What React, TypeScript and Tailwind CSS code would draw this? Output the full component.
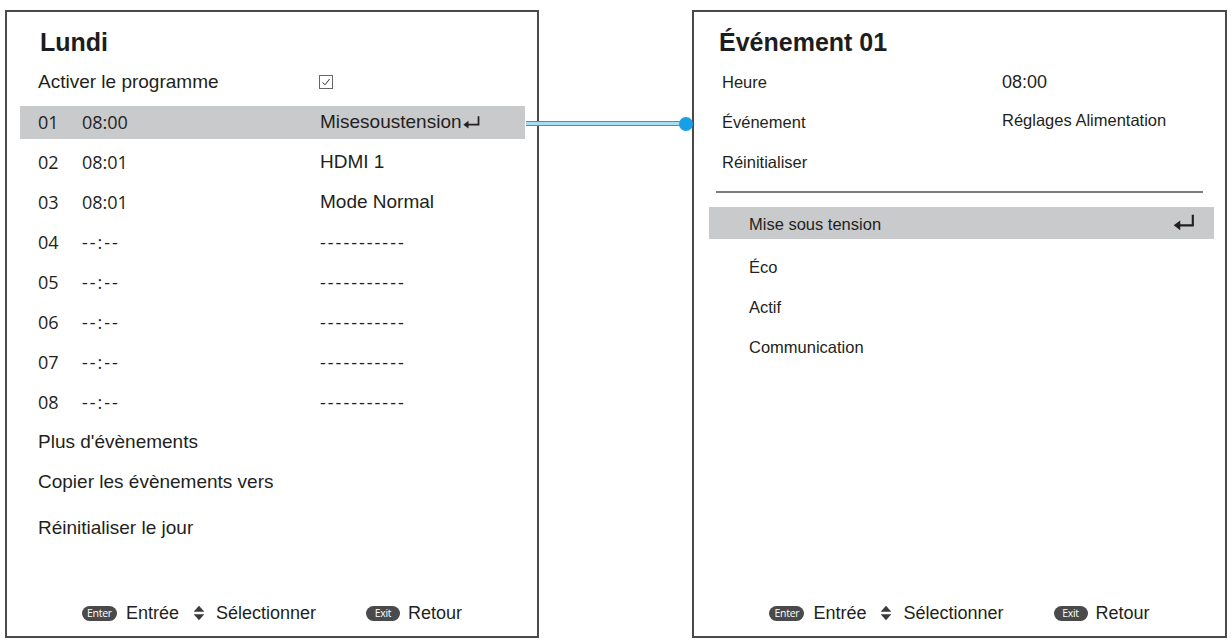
import type { ReactNode } from "react";

const sans = "font-['Liberation_Sans',Arial,sans-serif]";
const digits = "font-['Open_Sans','Noto_Sans',sans-serif]";

type Slot = { no: string; time: string; event: string; active?: boolean };

const slots: Slot[] = [
  { no: "01", time: "08:00", event: "Misesoustension", active: true },
  { no: "02", time: "08:01", event: "HDMI 1" },
  { no: "03", time: "08:01", event: "Mode Normal" },
  { no: "04", time: "--:--", event: "-----------" },
  { no: "05", time: "--:--", event: "-----------" },
  { no: "06", time: "--:--", event: "-----------" },
  { no: "07", time: "--:--", event: "-----------" },
  { no: "08", time: "--:--", event: "-----------" },
];

const powerOptions = ["Éco", "Actif", "Communication"];

function ReturnGlyph({ className }: { className: string }) {
  return (
    <svg viewBox="0 0 16 12" className={className} fill="none">
      <path d="M4 8.5H14.6V0.5" stroke="currentColor" strokeWidth="1.6" />
      <path d="M0.3 8.5L5.2 4.8V12.2Z" fill="currentColor" />
    </svg>
  );
}

function CheckBox() {
  return (
    <svg viewBox="0 0 14 14" className="w-[14px] h-[14px]">
      <rect x="0.5" y="0.5" width="13" height="13" fill="none" stroke="#666" />
      <path d="M3.6 7.3L6 9.8L10.6 4" stroke="#333" strokeWidth="1" fill="none" />
    </svg>
  );
}

function UpDown() {
  return (
    <svg viewBox="0 0 11 15" className="w-[12px] h-[16px] text-[#3a3a3a]">
      <path d="M0.5 6.3L5.5 0.8L10.5 6.3Z" fill="currentColor" />
      <path d="M0.5 8.7L5.5 14.2L10.5 8.7Z" fill="currentColor" />
    </svg>
  );
}

function Key({ label, width }: { label: string; width: string }) {
  return (
    <span
      className={`${width} h-[15px] rounded-full bg-[#4a4a4a] text-white text-[10.5px] leading-none tracking-[-0.3px] flex items-center justify-center ${digits}`}
    >
      {label}
    </span>
  );
}

function HintBar() {
  return (
    <div className={`mt-auto mb-[11px] h-[24px] flex items-center justify-center text-[18px] text-[#231f20] ${sans}`}>
      <Key label="Enter" width="w-[35px]" />
      <span className="ml-[9px]">Entrée</span>
      <span className="ml-[14px] flex">
        <UpDown />
      </span>
      <span className="ml-[11px]">Sélectionner</span>
      <span className="ml-[50px]">
        <Key label="Exit" width="w-[34px]" />
      </span>
      <span className="ml-[8px]">Retour</span>
    </div>
  );
}

function Panel({ children, width }: { children: ReactNode; width: string }) {
  return (
    <section className={`${width} h-[628px] border-2 border-[#4a4a4a] bg-white flex flex-col pt-[15px] text-[#231f20] ${sans}`}>
      {children}
    </section>
  );
}

// Left list rows share the same inset so the highlight lines up with the text columns
function DayRow({ children, active, className = "" }: { children: ReactNode; active?: boolean; className?: string }) {
  return (
    <div className={`ml-[13px] mr-[12px] h-[40px] flex items-center ${className}`}>
      <div className={`w-full h-[33px] flex items-center pl-[18px] ${active ? "bg-[#c9cacc]" : ""}`}>{children}</div>
    </div>
  );
}

function DayPanel() {
  return (
    <Panel width="w-[534px]">
      <h1 className="pl-[33px] h-[30px] leading-[30px] text-[25px] font-bold text-[#1d1d1d]">Lundi</h1>

      <div className="mt-[5px] text-[19px]">
        <DayRow>
          <span className="w-[281px]">Activer le programme</span>
          <CheckBox />
        </DayRow>

        {slots.map((s) => {
          const empty = s.time.startsWith("-");
          return (
            <DayRow key={s.no} active={s.active}>
              <span className={`w-[44px] text-[18px] ${digits}`}>{s.no}</span>
              <span className={`w-[238px] text-[18px] ${digits} ${empty ? "tracking-[2px]" : ""}`}>{s.time}</span>
              <span className={`flex items-center ${empty ? `text-[18px] tracking-[2px] ${digits}` : ""}`}>
                {s.event}
                {s.active && <ReturnGlyph className="w-[17px] h-[14px] ml-[1px] -mt-[1px] text-[#231f20]" />}
              </span>
            </DayRow>
          );
        })}

        <DayRow>Plus d'évènements</DayRow>
        <DayRow>Copier les évènements vers</DayRow>
        <DayRow className="mt-[6px]">Réinitialiser le jour</DayRow>
      </div>

      <HintBar />
    </Panel>
  );
}

function EventPanel() {
  const fields = [
    { label: "Heure", value: "08:00", big: true },
    { label: "Événement", value: "Réglages Alimentation" },
    { label: "Réinitialiser", value: "" },
  ];

  return (
    <Panel width="w-[535px]">
      <h2 className="pl-[25px] h-[30px] leading-[30px] text-[25px] font-bold text-[#1d1d1d]">Événement 01</h2>

      <div className="mt-[5px] text-[16.5px]">
        {fields.map((f) => (
          <div key={f.label} className="h-[40px] flex items-center pl-[28px]">
            <span className="w-[280px]">{f.label}</span>
            <span className={f.big ? "text-[18px]" : "text-[16.5px] -mt-[3px]"}>{f.value}</span>
          </div>
        ))}
      </div>

      <div className="mt-[9px] ml-[22px] mr-[22px] h-[2px] bg-[#7d7d7d]" />

      <div className="mt-[14px] ml-[15px] mr-[11px] text-[16.5px]">
        <div className="h-[32px] bg-[#c9cacc] flex items-center justify-between pl-[40px] pr-[19px]">
          <span className="mt-[3px]">Mise sous tension</span>
          <ReturnGlyph className="w-[22px] h-[16px] -mt-[2px] text-[#231f20]" />
        </div>
        <div className="mt-[8px]">
          {powerOptions.map((o) => (
            <div key={o} className="h-[40px] flex items-center pl-[40px]">
              {o}
            </div>
          ))}
        </div>
      </div>

      <HintBar />
    </Panel>
  );
}

export default function App() {
  return (
    <div className="relative w-[1231px] h-[640px] bg-white overflow-hidden">
      <div className="flex pt-[10px] pl-[5px]">
        <DayPanel />
        <div className="ml-[153px]">
          <EventPanel />
        </div>
      </div>

      {/* link from the selected slot to its detail panel */}
      <div className="absolute left-[526px] top-[121px] w-[158px] h-[5px] border-y border-[#2c9ad4] bg-[#a8dcf5]" />
      <div className="absolute left-[679px] top-[117px] w-[14px] h-[14px] rounded-full bg-[#18a0e6]" />
    </div>
  );
}
